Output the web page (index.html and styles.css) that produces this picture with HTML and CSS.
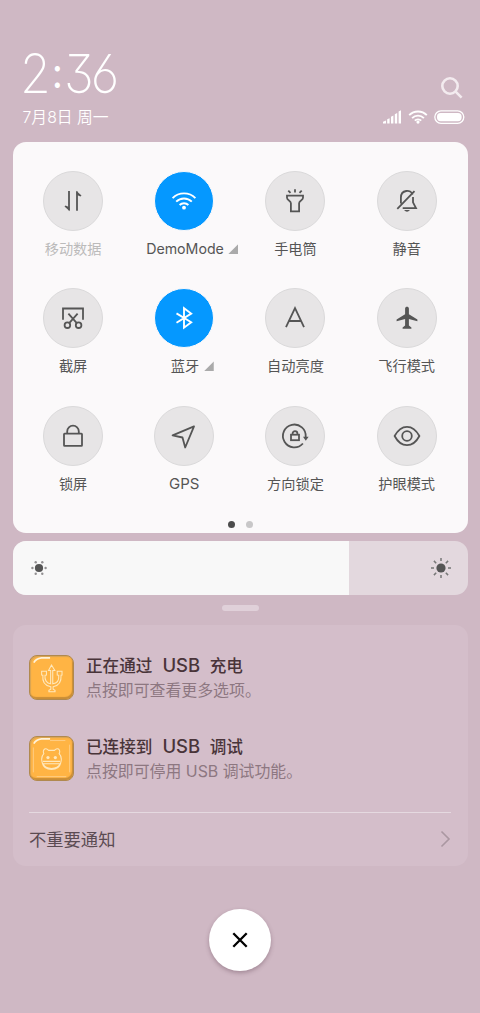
FILE: index.html
```html
<!DOCTYPE html>
<html lang="zh-CN">
<head>
<meta charset="utf-8">
<title>控制中心</title>
<link rel="stylesheet" href="styles.css">
</head>
<body>
<main class="screen">
  <header class="header">
    <div>
      <div class="clock">2<span class="colon">:</span>36</div>
      <div class="date">7月8日 周一</div>
    </div>
    <div class="status">
      <svg class="search" width="24" height="24" viewBox="0 0 24 24"><circle cx="10" cy="10" r="7.7"/><path d="M15.6 15.6l6 6"/></svg>
      <div class="indicators">
        <svg class="solid" width="19" height="14" viewBox="0 0 19 14"><path d="M0 13.5v-1.800l3-1.300v3.100zM4.200 13.500V9.200l2.400-1v5.300zM8 13.500V6.800L10.400 5.500v8zM11.800 13.500V4.300l2.400-1.400v10.600zM15.600 13.500V1.600L18 .3v13.200z"/></svg>
        <svg class="wifi" width="20" height="14" viewBox="0 0 20 14"><path d="M1.200 5.200a12.400 12.400 0 0 1 17.600 0M4.100 8.100a8.300 8.300 0 0 1 11.800 0M6.800 10.700a4.500 4.500 0 0 1 6.400 0"/><circle cx="10" cy="12.100" r="1.600"/></svg>
        <svg class="battery" width="31" height="14" viewBox="0 0 31 14"><rect class="shell" x=".8" y=".9" width="29" height="12.400" rx="6.200"/><rect class="charge" x="3" y="3" width="24.600" height="8.200" rx="3.600"/></svg>
      </div>
    </div>
  </header>

  <section class="panel">
    <div class="tiles">
      <div class="tile off">
        <div class="disc"><svg viewBox="0 0 30 30"><path d="M11 5v19.200M19 24.800V5.400"/><path class="fill" d="M11.800 25.200l-5.300-4.800 1-1 3.500 1.500zM18.200 4.800l5.300 4.800-1 1-3.500-1.500z"/></svg></div>
        <div class="label">移动数据</div>
      </div>
      <div class="tile on">
        <div class="disc"><svg viewBox="0 0 30 30"><path d="M3.600 12.100a16 16 0 0 1 22.800 0M7.200 15.700a11 11 0 0 1 15.600 0M10.600 19a6.300 6.300 0 0 1 8.800 0"/><circle class="fill" cx="15" cy="21.700" r="1.900"/></svg></div>
        <div class="label">DemoMode<i class="corner"></i></div>
      </div>
      <div class="tile">
        <div class="disc"><svg viewBox="0 0 30 30"><path d="M7 9.600h16v2.200c0 2.600-3.900 2.800-3.900 5.400v8.100h-8.200v-8.100c0-2.600-3.900-2.800-3.900-5.400zM15 3.300v3.300M8.300 4.600l2.200 2.200M21.700 4.600l-2.200 2.200"/></svg></div>
        <div class="label">手电筒</div>
      </div>
      <div class="tile">
        <div class="disc"><svg viewBox="0 0 30 30"><path d="M5.300 22.800L22.500 5.100M8.900 17.400v-5.700c0-8.200 10.300-8.700 11.500-2.900M21 11v5.300l3 5.900H10.700"/><path class="fill" d="M12 24h6q-3 3.500-6 0z"/></svg></div>
        <div class="label">静音</div>
      </div>
      <div class="tile">
        <div class="disc"><svg viewBox="0 0 30 30"><path d="M5 16.700V5.500h20v11.200M10.400 10.700l8.200 9.200M19.600 10.700l-8.200 9.200"/><circle cx="9.400" cy="22.200" r="2.800"/><circle cx="20.600" cy="22.200" r="2.800"/></svg></div>
        <div class="label">截屏</div>
      </div>
      <div class="tile on">
        <div class="disc"><svg viewBox="0 0 30 30"><path d="M7.500 10.400l14.700 8.900-7.200 5.400V5.200l7.200 5.400L7.500 19.700"/></svg></div>
        <div class="label">蓝牙<i class="corner"></i></div>
      </div>
      <div class="tile">
        <div class="disc"><svg viewBox="0 0 30 30"><path d="M6 24.200l9-19 9 19M9 18h12"/></svg></div>
        <div class="label">自动亮度</div>
      </div>
      <div class="tile">
        <div class="disc"><svg viewBox="0 0 30 30"><path class="fill" d="M13.100 5.500c0-2.400 3.800-2.400 3.800 0v5.800l8.500 5.200v1.700l-8.500-2.300v6.500l2.500 2v1.300h-8.800v-1.300l2.500-2v-6.500l-8.500 2.300v-1.700l8.500-5.200z"/></svg></div>
        <div class="label">飞行模式</div>
      </div>
      <div class="tile">
        <div class="disc"><svg viewBox="0 0 30 30"><rect x="6" y="12.600" width="18" height="12.200" rx=".6"/><path d="M9.200 12.400v-2a5.800 5.800 0 0 1 11.600 0v2"/></svg></div>
        <div class="label">锁屏</div>
      </div>
      <div class="tile">
        <div class="disc"><svg viewBox="0 0 30 30"><path stroke-linejoin="round" d="M25 5.400L3.600 14.300l9.900 2.200 2.700 10z"/></svg></div>
        <div class="label gps">GPS</div>
      </div>
      <div class="tile">
        <div class="disc"><svg viewBox="0 0 30 30"><path d="M22.900 22.500A11.400 11.400 0 1 1 25.700 16"/><path class="fill" d="M23 15.700h5.600l-2.800 4z"/><rect x="11" y="13.700" width="8" height="5.500"/><path d="M12.600 13.500v-1a2.400 2.400 0 0 1 4.800 0v1"/></svg></div>
        <div class="label">方向锁定</div>
      </div>
      <div class="tile">
        <div class="disc"><svg viewBox="0 0 30 30"><path stroke-linejoin="round" d="M2.600 15Q7.500 5.800 15 5.800T27.400 15Q22.500 24.200 15 24.200T2.600 15z"/><circle cx="15" cy="15" r="4.800"/></svg></div>
        <div class="label">护眼模式</div>
      </div>
    </div>
    <div class="pager"><i class="dot current"></i><i class="dot"></i></div>
  </section>

  <section class="slider">
    <div class="level">
      <svg class="sun" width="18" height="18" viewBox="0 0 18 18"><circle class="core" cx="9" cy="9" r="4.100"/><g class="spark"><circle cx="2.400" cy="9" r="1.200"/><circle cx="15.600" cy="9" r="1.200"/><circle cx="5.700" cy="3.200" r="1.200"/><circle cx="12.300" cy="3.200" r="1.200"/><circle cx="5.700" cy="14.800" r="1.200"/><circle cx="12.300" cy="14.800" r="1.200"/></g></svg>
    </div>
    <svg class="sun" width="22" height="22" viewBox="0 0 22 22"><circle class="core" cx="11" cy="11" r="4.600"/><path class="rays" d="M11 1v3M11 18v3M1 11h3M18 11h3M3.900 3.900l2.300 2.300M15.800 15.800l2.300 2.300M18.100 3.900l-2.300 2.300M6.200 15.800l-2.300 2.300"/></svg>
  </section>

  <div class="handle"></div>

  <section class="notifications">
    <article class="note">
      <div class="app"><svg viewBox="0 0 45 45"><path class="shine" d="M4 7q2-4 8-5h9"/><path class="art" d="M22.500 9.500l3.500 5.600h-2.200v14c4.500-.5 6.700-4 6.300-9l-1.600-.2v-4h5v4l-1 .2c.5 7-2.700 11-8.300 12v2.600l2 1.300v1.400h-6.400V36l2-1.300v-2.600c-5.800-1-9.200-5-8.300-12l-1.300-.2v-4h5v4l-1.500.2c-.6 5 1.700 8.500 5.900 9v-14h-2.200z"/></svg></div>
      <div><h2 class="title">正在通过<span class="latin">USB</span>充电</h2><p class="detail">点按即可查看更多选项。</p></div>
    </article>
    <article class="note">
      <div class="app"><svg viewBox="0 0 45 45"><path class="shine" d="M4 7q2-4 8-5h9"/><path class="edge" d="M3.500 11v26M7 41.500h31M41.500 37V8M21 3.700h16"/><path class="art" d="M14.500 17.500c-1.500-3 .5-6 3-5l2 1.500h6l2-1.500c3-1 4.500 2 3 5 2.500 2.500 2.500 7 1.500 10-2 8.500-17 8.500-19 0-1-3-1-7.500 1.500-10zM13.500 25.500h18M13.800 28h17.500c-2.500 6.500-15 6.500-17.500 0z"/><circle class="eye" cx="18.800" cy="21.500" r="1.700"/><circle class="eye" cx="26.500" cy="21.500" r="1.700"/></svg></div>
      <div><h2 class="title">已连接到<span class="latin">USB</span>调试</h2><p class="detail">点按即可停用 USB 调试功能。</p></div>
    </article>
    <div class="more">
      <span class="more-text">不重要通知</span>
      <svg width="11" height="18" viewBox="0 0 11 18"><path d="M1.500 1.500L9 9l-7.500 7.500"/></svg>
    </div>
  </section>

  <button class="close" aria-label="关闭"><svg width="18" height="18" viewBox="0 0 18 18"><path d="M2.300 2.300l13.400 13.400M15.700 2.300L2.300 15.700"/></svg></button>
</main>
</body>
</html>
```
FILE: styles.css
```css
* { box-sizing: border-box; }
body {
  margin: 0;
  background: #cfb8c4;
  font-family: Inter, "Noto Sans CJK SC", sans-serif;
}
svg { display: block; fill: none; }
.screen {
  display: flex;
  flex-direction: column;
  height: 1013px;
  padding: 46px 12.5px 0;
}

.header {
  display: flex;
  justify-content: space-between;
  height: 96px;
  padding: 0 3px 0 10px;
  color: #fff;
}
.clock {
  margin: 1px 0 0 -3px;
  font-size: 54px;
  font-weight: 250;
  line-height: 54px;
  letter-spacing: -3px;
  font-feature-settings: "ss01", "cv03", "cv09";
  transform: scaleX(.925);
  transform-origin: left;
}
.colon {
  display: inline-block;
  margin: 0 4px;
  font-size: 42px;
  font-weight: 400;
  line-height: 42px;
  transform: translateY(-5px);
}
.date {
  margin-top: 6px;
  font-size: 15.800px;
  line-height: 22px;
  font-weight: 350;
}
.status {
  display: flex;
  flex-direction: column;
  align-items: flex-end;
  padding-top: 30px;
}
.search { margin-right: 1px; stroke: #f3ebef; stroke-width: 2.600; }
.indicators { display: flex; gap: 6px; margin-top: 9.500px; }
.solid { fill: #fff; }
.wifi { stroke: #fff; stroke-width: 1.900; }
.wifi circle { fill: #fff; stroke: none; }
.shell { stroke: #fff; stroke-width: 1.300; }
.charge { fill: #fff; }

.panel {
  height: 391px;
  padding: 29px 5px 0;
  border-radius: 13px;
  background: #fbf9fa;
}
.tiles {
  display: grid;
  grid-template-columns: repeat(4, 111.200px);
  grid-auto-rows: 117.400px;
}
.tile { display: flex; flex-direction: column; align-items: center; }
.disc {
  display: flex;
  align-items: center;
  justify-content: center;
  width: 60px;
  height: 60px;
  border: 1px solid #dad9da;
  border-radius: 50%;
  background: #e7e5e6;
}
.disc svg { width: 30px; height: 30px; stroke: #555; stroke-width: 1.800; }
.disc .fill { fill: #555; stroke: none; }
.on .disc { border: 1px solid #fbf9fa; background: #0598ff; }
.on .disc svg { stroke: #fff; stroke-width: 1.900; }
.on .disc .fill { fill: #fff; }
.label {
  display: flex;
  align-items: center;
  margin-top: 7px;
  color: #555;
  font-size: 14.200px;
  line-height: 22px;
  white-space: nowrap;
}
.gps { font-size: 15px; }
.off .label { color: #bbb; }
.on .label { padding-left: 16px; }
.corner {
  width: 10px;
  height: 10px;
  margin-left: 4.500px;
  background: #aaa;
  clip-path: polygon(100% 0, 100% 100%, 0 100%);
}
.pager { display: flex; justify-content: center; gap: 11px; margin-top: -2.500px; }
.dot { width: 7px; height: 7px; border-radius: 50%; background: #c8c7c8; }
.current { background: #4c4c4c; }

.slider {
  display: flex;
  align-items: center;
  justify-content: space-between;
  height: 54px;
  margin-top: 8px;
  padding-right: 15.500px;
  border-radius: 13px;
  overflow: hidden;
  background: #e3d8de;
}
.level {
  display: flex;
  flex: none;
  align-items: center;
  width: 336.500px;
  height: 100%;
  padding-left: 17.500px;
  background: #f8f8f8;
}
.core { fill: #555; }
.spark { fill: #929092; }
.rays { stroke: #777; stroke-width: 1.500; }
.handle {
  width: 37px;
  height: 5.500px;
  margin: 10px auto 0;
  border-radius: 3px;
  background: #e0d0d9;
}

.notifications {
  height: 241px;
  margin-top: 14px;
  padding: 30px 17px 0 16.500px;
  border-radius: 13px;
  background: #d4beca;
}
.note { display: flex; gap: 12px; height: 81.500px; }
.app {
  width: 45px;
  height: 45px;
  border: 1px solid #b0894f;
  border-radius: 8px;
  background: #ffb444;
  box-shadow: inset -1px -2px 1px #c98d37, inset 1px 1px 1px #d8a355;
}
.art { stroke: #ffe8bd; stroke-width: 1.100; }
.shine { stroke: #fff2d9; stroke-width: 1.800; }
.edge { stroke: #ffcf86; stroke-width: 1; }
.eye { fill: #ffe8bd; }
.title {
  margin: 0;
  color: #493439;
  font-size: 16.600px;
  font-weight: 500;
  line-height: 22px;
}
.latin { margin: 0 9.500px 0 10px; font-size: 18.500px; font-weight: 450; line-height: 20px; }
.detail {
  margin: 3px 0 0;
  color: #8d7781;
  font-size: 15.900px;
  line-height: 22px;
}
.more {
  display: flex;
  align-items: center;
  justify-content: space-between;
  height: 54px;
  margin-top: -6px;
  border-top: 1px solid #e5d9e0;
  color: #5b4b52;
  font-size: 17.300px;
}
.more-text { padding-bottom: 2px; }
.more svg { stroke: #aa97a1; stroke-width: 1.600; }

.close {
  display: flex;
  align-items: center;
  justify-content: center;
  width: 62px;
  height: 62px;
  margin: 43px auto 0;
  padding: 0;
  border: 0;
  border-radius: 50%;
  background: #fff;
  box-shadow: 0 2px 4px rgba(80, 50, 65, .35);
}
.close svg { stroke: #000; stroke-width: 2.300; }
```
